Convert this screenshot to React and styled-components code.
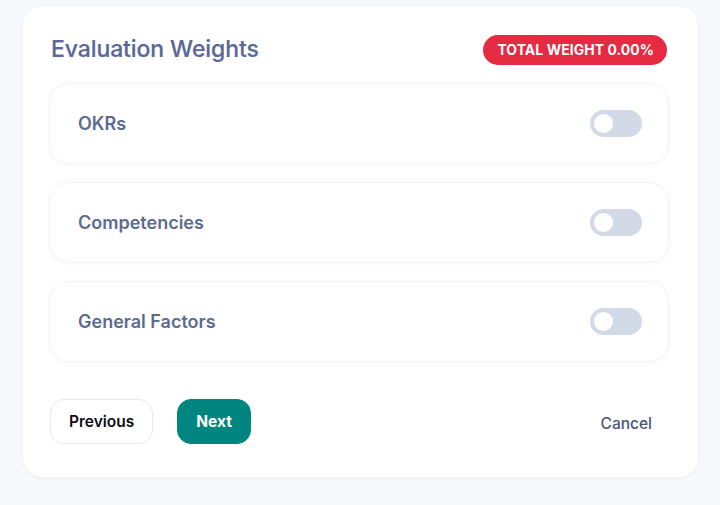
import React, { useState } from 'react';
import styled, { createGlobalStyle } from 'styled-components';

const GlobalStyle = createGlobalStyle`
  html, body {
    margin: 0;
    padding: 0;
    background: #f7f8fc;
    font-family: Inter, "Noto Sans", sans-serif;
  }
`;

const Page = styled.div`
  padding: 6px 22px 28px 23px;
  min-height: 505px;
  box-sizing: border-box;
`;

const Card = styled.div`
  width: 675px;
  box-sizing: border-box;
  background: #ffffff;
  border-radius: 20px;
  box-shadow: 0 1px 4px rgba(30, 40, 90, 0.05);
  padding: 29px 29px 33px 26px;
`;

const Header = styled.div`
  display: flex;
  align-items: center;
  justify-content: space-between;
  height: 30px;
  padding-left: 2px;
  padding-right: 2px;
`;

const Title = styled.h2`
  margin: 0;
  font-size: 23px;
  font-weight: 500;
  color: #5a6897;
  letter-spacing: -0.1px;
  line-height: 1;
  margin-top: -2px;
  -webkit-text-stroke: 0.2px #5a6897;
`;

const Badge = styled.span`
  display: inline-flex;
  align-items: center;
  height: 30px;
  padding: 0 13px 0 14px;
  border-radius: 15px;
  background: #e52a41;
  color: #ffffff;
  font-size: 13.9px;
  font-weight: 700;
  letter-spacing: 0.1px;
`;

const List = styled.div`
  display: flex;
  flex-direction: column;
  gap: 18px;
  margin-top: 18px;
`;

const Row = styled.div`
  display: flex;
  align-items: center;
  justify-content: space-between;
  height: 81px;
  box-sizing: border-box;
  padding: 0 26px 0 28px;
  border: 1px solid #f3f4f8;
  border-radius: 20px;
  box-shadow: 0 1px 4px rgba(30, 40, 90, 0.04);
`;

const Label = styled.span`
  font-size: 18px;
  font-weight: 600;
  color: #5c6b8e;
`;

const Switch = styled.button`
  position: relative;
  width: 52px;
  height: 27px;
  border: none;
  padding: 0;
  border-radius: 14px;
  background: ${p => (p.$on ? '#008580' : '#d3dae7')};
  cursor: pointer;

  &::after {
    content: '';
    position: absolute;
    top: 4px;
    left: ${p => (p.$on ? '29px' : '4px')};
    width: 19px;
    height: 19px;
    border-radius: 50%;
    background: #ffffff;
  }
`;

const Footer = styled.div`
  display: flex;
  align-items: center;
  gap: 24px;
  margin-top: 37px;
  padding-left: 1px;
`;

const Button = styled.button`
  height: 45px;
  box-sizing: border-box;
  padding: 0 18px;
  border-radius: 14px;
  border: 1px solid ${p => (p.$primary ? '#008580' : '#e5e9f8')};
  background: ${p => (p.$primary ? '#008580' : '#ffffff')};
  color: ${p => (p.$primary ? '#ffffff' : '#0c0c14')};
  font-family: inherit;
  font-size: 15.5px;
  font-weight: ${p => (p.$primary ? 700 : 600)};
  cursor: pointer;
`;

const Cancel = styled.button`
  margin-left: auto;
  margin-right: 17px;
  margin-top: 4px;
  border: none;
  background: none;
  padding: 0;
  font-family: inherit;
  font-size: 15.5px;
  font-weight: 500;
  color: #475677;
  cursor: pointer;
`;

const items = ['OKRs', 'Competencies', 'General Factors'];

export default function App() {
  const [on, setOn] = useState({});
  return (
    <Page>
      <GlobalStyle />
      <Card>
        <Header>
          <Title>Evaluation Weights</Title>
          <Badge>TOTAL WEIGHT 0.00%</Badge>
        </Header>
        <List>
          {items.map(name => (
            <Row key={name}>
              <Label>{name}</Label>
              <Switch
                $on={!!on[name]}
                onClick={() => setOn(s => ({ ...s, [name]: !s[name] }))}
              />
            </Row>
          ))}
        </List>
        <Footer>
          <Button>Previous</Button>
          <Button $primary>Next</Button>
          <Cancel>Cancel</Cancel>
        </Footer>
      </Card>
    </Page>
  );
}
